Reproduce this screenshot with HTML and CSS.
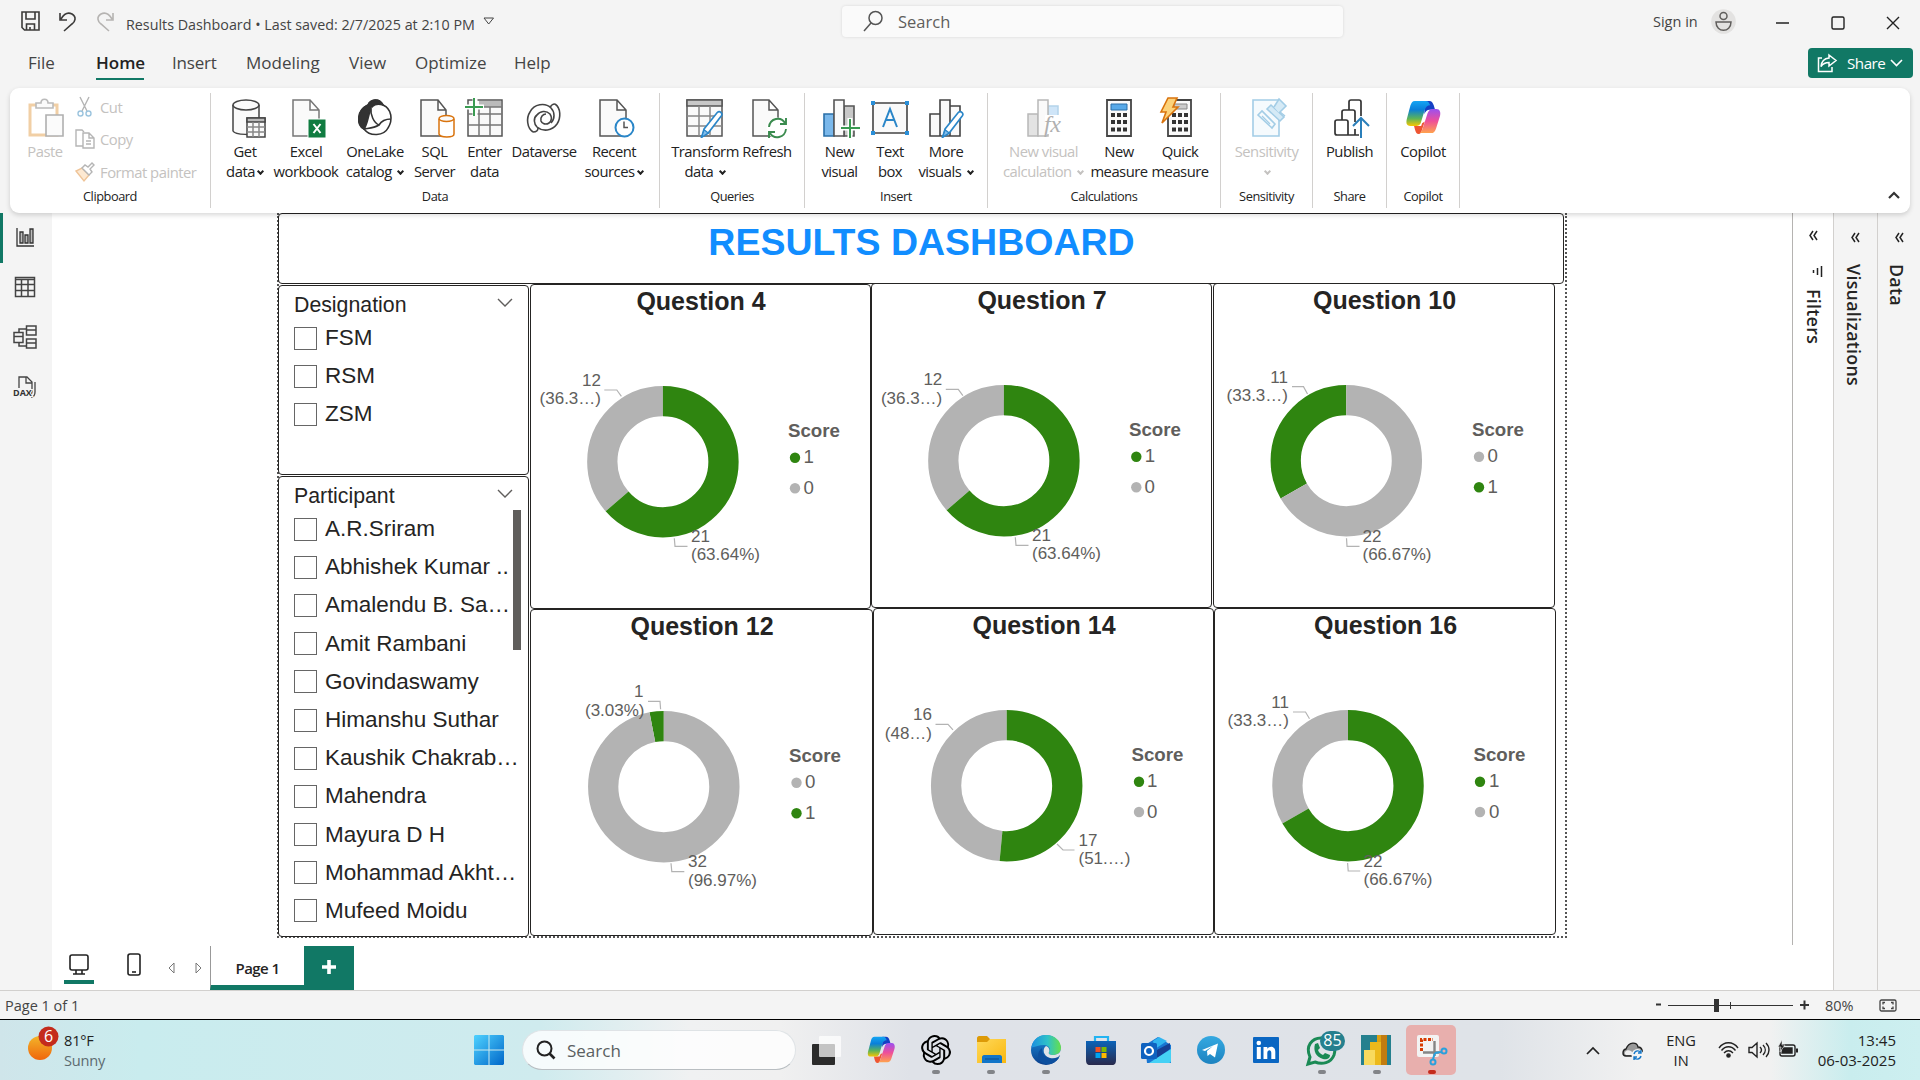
FILE: index.html
```html
<!DOCTYPE html>
<html lang="en">
<head>
<meta charset="utf-8">
<title>Results Dashboard</title>
<link rel="stylesheet" href="styles.css">
</head>
<body>
<svg class="defs" width="0" height="0">
  <defs>
    <linearGradient id="cpA" x1="0" y1="0" x2="0" y2="1"><stop offset="0" stop-color="#14a5f4"/><stop offset=".35" stop-color="#0a7fd9"/><stop offset=".7" stop-color="#5bb35a"/><stop offset="1" stop-color="#f7c600"/></linearGradient>
    <linearGradient id="cpB" x1="0" y1="0" x2="0" y2="1"><stop offset="0" stop-color="#9b50f0"/><stop offset=".5" stop-color="#ee4f9a"/><stop offset="1" stop-color="#ffa34d"/></linearGradient>
    <linearGradient id="win" x1="0" y1="0" x2="1" y2="1"><stop offset="0" stop-color="#4fd2ff"/><stop offset="1" stop-color="#0067c9"/></linearGradient>
    <linearGradient id="sun" x1="0" y1="0" x2="0" y2="1"><stop offset="0" stop-color="#f2b52a"/><stop offset="1" stop-color="#f0660c"/></linearGradient>
    <linearGradient id="fold" x1="0" y1="0" x2="1" y2="1"><stop offset="0" stop-color="#ffd95a"/><stop offset="1" stop-color="#f9b70f"/></linearGradient>
    <linearGradient id="edgeA" x1="0" y1="0" x2="1" y2="0"><stop offset="0" stop-color="#1c8fe0"/><stop offset=".55" stop-color="#2fc2c8"/><stop offset="1" stop-color="#66e04a"/></linearGradient>
    <linearGradient id="edgeB" x1="0" y1="0" x2="0" y2="1"><stop offset="0" stop-color="#1b8ddb"/><stop offset="1" stop-color="#0b3f8c"/></linearGradient>
    <linearGradient id="store" x1="0" y1="0" x2="0" y2="1"><stop offset="0" stop-color="#0b63b8"/><stop offset="1" stop-color="#2a2a4c"/></linearGradient>
    <linearGradient id="tg" x1="0" y1="0" x2="0" y2="1"><stop offset="0" stop-color="#35a9e1"/><stop offset="1" stop-color="#1d83c0"/></linearGradient>
    <symbol id="copilot" viewBox="0 0 38 38">
      <path d="M21 1h5c3 0 4 2 5 5l1.500 5h-6c-3 0-5 2-6 5z" fill="#1440c4"/>
      <path d="M9 29h8l1-3 3-2-3 9c-.7 3-1.500 5-4 5-2 0-3-1.500-4-5z" fill="#ee5532"/>
      <path d="M10 1h12c3 0 4 2 5 5-3 0-5 2-6 5l-4 13c-1 4-3 5-6 5H5c-5 0-5-4-4-8L5 6c1-3 2-5 5-5z" fill="url(#cpA)"/>
      <path d="M28 37H14c2.500 0 3.500-2 4.500-5l5.500-17c1-3 3-5 6-5h4c4 0 5 4 4 8l-4.500 14c-1 3-2.500 5-5.500 5z" fill="url(#cpB)"/>
    </symbol>
    <symbol id="pencil" viewBox="0 0 26 34">
      <path d="M1 33l3-10L20 3c3-3 7 1 5 4L9 28z" fill="#fff" stroke="#2a86c8" stroke-width="2"/>
      <path d="M1 33l3-9 5 4z" fill="#83beec" stroke="#2a86c8"/>
    </symbol>
  </defs>
</svg>

<header class="titlebar">
  <svg class="quick" width="100" height="24" viewBox="0 0 100 24" fill="none" stroke="#3b3a39" stroke-width="1.600">
    <path d="M2 3h17v18H4.500L2 18.500zM6 3v7h9V3M6.500 21v-6h8v6M10 21v-3"/>
    <path d="M40 4v7h7M41 10c3-5 7-7 11-5 5 3 3 8 0 10l-8 7"/>
    <path d="M93 4v7h-7M92 10c-3-5-7-7-11-5-5 3-3 8 0 10l8 7" stroke="#b5b3b1"/>
  </svg>
  <span class="doc">Results Dashboard • Last saved: 2/7/2025 at 2:10 PM</span>
  <svg class="doc-arrow" width="12" height="9" viewBox="0 0 12 9" fill="none" stroke="#444"><path d="M1 1h9.500L5.700 7z"/></svg>
  <div class="search">
    <svg width="20" height="22" viewBox="0 0 20 22" fill="none" stroke="#555" stroke-width="1.500"><circle cx="12.500" cy="8" r="6.500"/><path d="M8 13L1 21"/></svg>
    <span>Search</span>
  </div>
  <span class="signin">Sign in</span>
  <svg class="avatar" width="25" height="25" viewBox="0 0 25 25"><circle cx="12.500" cy="12.500" r="12.300" fill="#e3e2e1"/><g fill="none" stroke="#605e5c" stroke-width="1.500"><circle cx="12.500" cy="7" r="3.500"/><path d="M5 13h15c0 11-15 11-15 0z"/></g></svg>
  <svg class="winctl" width="124" height="16" viewBox="0 0 124 16" fill="none" stroke="#222" stroke-width="1.400"><path d="M0 8h13M111 2l12 12M123 2l-12 12"/><rect x="56" y="2" width="12" height="12" rx="1.500"/></svg>
</header>

<nav class="tabs">
  <a class="t-file">File</a><a class="t-home">Home</a><a class="t-insert">Insert</a><a class="t-model">Modeling</a><a class="t-view">View</a><a class="t-opt">Optimize</a><a class="t-help">Help</a>
  <button class="share"><svg width="20" height="20" viewBox="0 0 20 20" fill="none" stroke="#fff" stroke-width="1.500"><path d="M5 5H1.500v13.500H15V14M12 2l7 5.500-7 5.500v-3.500c-4 0-6 1-8 4 .5-5 3-8 8-8.500z"/></svg><span>Share</span><svg width="13" height="8" viewBox="0 0 13 8" fill="none" stroke="#fff" stroke-width="1.600"><path d="M1 1l5.500 5.500L12 1"/></svg></button>
</nav>

<section class="ribbon">
  <div class="group g-clip">
    <div class="btns">
      <div class="rb w-paste off"><svg width="38" height="40" viewBox="0 0 38 40" fill="#fbfbfb" stroke-width="1.600"><path d="M4 7h27v30H4z" stroke="#f1cfa5" fill="#fff" stroke-width="3"/><path d="M10 10V5h5c0-5 7-5 7 0h5v5z" stroke="#bbb"/><path d="M20 17h17v21H20z" stroke="#b0b0b0"/></svg><span>Paste</span></div>
      <div class="clip-list">
        <div class="ci"><svg width="20" height="20" viewBox="0 0 20 20" fill="none" stroke="#b5b5b5" stroke-width="1.400"><path d="M5 0l7 14M14 0L7 14"/><circle cx="5.500" cy="16.500" r="2.500" stroke="#9cc4de"/><circle cx="13.500" cy="16.500" r="2.500" stroke="#9cc4de"/></svg><span>Cut</span></div>
        <div class="ci"><svg width="20" height="20" viewBox="0 0 20 20" fill="#fff" stroke="#b5b5b5" stroke-width="1.400"><path d="M8 17H1V1h6l2 2"/><path d="M8 4h6l5 5v10H8zM14 4v5h5M11 12h5M11 15h5"/></svg><span>Copy</span></div>
        <div class="ci"><svg width="20" height="20" viewBox="0 0 20 20" fill="#fff" stroke-width="1.400"><path d="M1 9l8 10 5-6-7-7z" stroke="#efc498" fill="#fde9d2"/><path d="M7 6l7 7 3-3-2-3 4-4-2-2-4 4-3-2z" stroke="#b5b5b5"/></svg><span>Format painter</span></div>
      </div>
    </div>
    <div class="gl">Clipboard</div>
  </div>
  <div class="group g-data">
    <div class="btns">
      <div class="rb w60"><svg width="40" height="40" viewBox="0 0 40 40" fill="#fafafa" stroke="#444" stroke-width="1.500"><path d="M8 7v26c2 4 22 5 26 0V7"/><ellipse cx="21" cy="7" rx="13" ry="5"/><path d="M22 20h18v19H22z"/><path d="M22 20h18v4H22z" fill="#bbb"/><path d="M22 29h18M22 34h18M28 24v15M34 24v15" stroke="#888"/></svg><span>Get<br>data<i class="v"></i></span></div>
      <div class="rb w62"><svg width="40" height="40" viewBox="0 0 40 40" fill="#fafafa" stroke="#777" stroke-width="1.500"><path d="M7 2h17l9 10v26H7zM24 2v10h9"/><path d="M22 21h18v19H22z" fill="#107c41" stroke="#fff" stroke-width="1"/><path d="M27.500 26l7 9M34.500 26l-7 9" stroke="#fff" stroke-width="2"/></svg><span>Excel<br>workbook</span></div>
      <div class="rb w76"><svg width="40" height="40" viewBox="0 0 40 40" fill="#fff" stroke="#333" stroke-width="1.600"><path d="M13 7C16 1 24 0 28 7c9 4 10 15 5 23-4 8-18 9-24 1C1 28 2 12 13 7z"/><path d="M13 7C16 1 24 0 28 7c-6-2-11 0-12 4-3 6-3 14-7 20C1 25 2 12 13 7z" fill="#333"/><path d="M16 9c-1 8 3 16 8 18 3-5 8-6 12-6M9 31c6-1 10-1 15-4"/></svg><span>OneLake<br>catalog <i class="v"></i></span></div>
      <div class="rb w43"><svg width="40" height="40" viewBox="0 0 40 40" fill="#fafafa" stroke="#555" stroke-width="1.500"><path d="M6 2h17l8 10v26H6zM23 2v10h8"/><path d="M24 21v15c1 4 15 4 15 0V21" stroke="#d9730d" fill="#fff"/><ellipse cx="31.500" cy="20.500" rx="7.500" ry="3" stroke="#d9730d"/></svg><span>SQL<br>Server</span></div>
      <div class="rb w57"><svg width="40" height="40" viewBox="0 0 40 40" fill="none" stroke="#555" stroke-width="1.500"><path d="M3 2h34v36H3z" fill="#fafafa"/><path d="M14 3h22v6H14z" fill="#bbb" stroke="none"/><path d="M3 16h34M3 27h34M14 9v29M25 9v29M3 9h34" stroke="#777"/><path d="M10 0v18M0 9h19" stroke="#fff" stroke-width="5"/><path d="M9 0v18M0 9h18" stroke="#3a9b52" stroke-width="2"/></svg><span>Enter<br>data</span></div>
      <div class="rb w62"><svg width="40" height="40" viewBox="0 0 40 40" fill="none" stroke="#444" stroke-width="1.600"><path d="M31 6c6 4 6 14 2 20-5 7-14 8-20 3-3-3-4-9 0-12 3-4 9-5 13-1 2 3 2 7-1 9-3 2-7 1-8-2-1-4 2-7 5-7"/><path d="M9 34c-6-4-7-14-3-20 4-8 15-10 21-4 4 4 4 11 0 15M9 34c4 0 5-2 5-4M31 6c-3 0-4 1-5 4"/></svg><span>Dataverse</span></div>
      <div class="rb w78"><svg width="40" height="40" viewBox="0 0 40 40" fill="#fafafa" stroke="#555" stroke-width="1.500"><path d="M6 2h17l9 10v26H6zM23 2v10h9"/><circle cx="30.500" cy="29.500" r="9" fill="#fff" stroke="#2a86c8" stroke-width="2"/><path d="M30 23.500v6h4" fill="none"/></svg><span>Recent<br>sources<i class="v"></i></span></div>
    </div>
    <div class="gl">Data</div>
  </div>
  <div class="group g-query">
    <div class="btns">
      <div class="rb w68"><svg width="40" height="40" viewBox="0 0 40 40" fill="none" stroke="#555" stroke-width="1.500"><path d="M2 2h35v36H2z" fill="#fafafa"/><path d="M2 2h35v6H2z" fill="#c8c8c8"/><path d="M2 18h35M2 28h35M14 8v30M25 8v30" stroke="#888"/><use href="#pencil" x="14" y="12" width="25" height="28"/></svg><span>Transform<br>data <i class="v"></i></span></div>
      <div class="rb w56"><svg width="40" height="40" viewBox="0 0 40 40" fill="#fafafa" stroke="#555" stroke-width="1.500"><path d="M6 2h16l9 10v26H6zM22 2v10h9"/><circle cx="30" cy="30" r="10.500" fill="#fff" stroke="none"/><path d="M22 29c1-9 12-11 16-4M39 20v6h-6M39 31c-1 9-12 11-16 4M22 40v-6h6" fill="none" stroke="#3a8b4e" stroke-width="1.900"/></svg><span>Refresh</span></div>
    </div>
    <div class="gl">Queries</div>
  </div>
  <div class="group g-ins">
    <div class="btns">
      <div class="rb w51"><svg width="40" height="40" viewBox="0 0 40 40" stroke="#555" stroke-width="1.600"><path d="M24 8h10v30H24z" fill="#c8c8c8"/><path d="M4 16h10v22H4z" fill="#7ab8eb" stroke="#2a6fa8"/><path d="M14 2h10v36H14z" fill="#fafafa"/><path d="M30 20v20M20 30h20" stroke="#fff" stroke-width="5"/><path d="M30 21v19M21 30h19" stroke="#3a9b52" stroke-width="2"/></svg><span>New<br>visual</span></div>
      <div class="rb w50"><svg width="40" height="40" viewBox="0 0 40 40" fill="none" stroke="#444" stroke-width="1.600"><path d="M3 5h34v30H3z" fill="#fafafa"/><path d="M13 29l7-18 7 18M15.500 22h9" stroke="#2a86c8" stroke-width="2"/><path d="M1 3h4v4H1zM35 3h4v4h-4zM1 33h4v4H1zM35 33h4v4h-4z" fill="#2a8fd8" stroke="none"/></svg><span>Text<br>box</span></div>
      <div class="rb w62"><svg width="40" height="40" viewBox="0 0 40 40" stroke="#444" stroke-width="1.600"><path d="M4 16h10v22H4zM24 8h10v30H24zM14 2h10v36H14z" fill="#fafafa"/><use href="#pencil" x="14" y="12" width="25" height="28"/></svg><span>More<br>visuals <i class="v"></i></span></div>
    </div>
    <div class="gl">Insert</div>
  </div>
  <div class="group g-calc">
    <div class="btns">
      <div class="rb w89 off"><svg width="40" height="40" viewBox="0 0 40 40" stroke="#b8b8b8" stroke-width="1.500"><path d="M24 8h10v16H24z" fill="#cfe5f8" stroke="#b4d3ea"/><path d="M4 16h10v22H4z" fill="#e3e3e3"/><path d="M14 2h10v36H14z" fill="#fafafa"/><path d="M21 17h18v19H21z" fill="#fff" stroke="none"/><text x="20" y="34" class="fx">fx</text></svg><span>New visual<br>calculation <i class="v"></i></span></div>
      <div class="rb w62"><svg width="40" height="40" viewBox="0 0 40 40" fill="#fafafa" stroke="#444" stroke-width="1.800"><path d="M8 2h24v36H8z"/><path d="M12 6h16v6H12z" fill="#58a9e8" stroke="#2a6fa8" stroke-width="1"/><path d="M12 17h16M12 24h16M12 31.500h16" stroke="#333" stroke-width="4" stroke-dasharray="4 2"/></svg><span>New<br>measure</span></div>
      <div class="rb w60"><svg width="40" height="40" viewBox="0 0 40 40" fill="#fafafa" stroke="#444" stroke-width="1.800"><path d="M8 2h23v36H8z"/><path d="M14 6h13v5H14z" fill="#ccc" stroke="#888" stroke-width="1"/><path d="M12 17h16M12 24h16M12 31.500h16" stroke="#333" stroke-width="4" stroke-dasharray="4 2"/><path d="M8 0h9l-4 9h5L2 25l4-11H1z" fill="#fcd27a" stroke="#d9730d" stroke-width="1.600"/></svg><span>Quick<br>measure</span></div>
    </div>
    <div class="gl">Calculations</div>
  </div>
  <div class="group g-sens">
    <div class="btns"><div class="rb off"><svg width="40" height="40" viewBox="0 0 40 40" fill="#f5fafd" stroke="#a3cde6" stroke-width="1.600"><path d="M6 2h26v36H6z"/><path d="M11 17l4-4 13 13-3 4z"/><path d="M15 18l8 8" stroke-width="1.200"/><path d="M20 11l4-4 13 12-4 4z" fill="#d5eaf6"/><path d="M27 9l5-8 7 7-7 7M33 14l5 4" fill="#d5eaf6"/></svg><span>Sensitivity<br><i class="v"></i></span></div></div>
    <div class="gl">Sensitivity</div>
  </div>
  <div class="group g-share">
    <div class="btns"><div class="rb"><svg width="40" height="40" viewBox="0 0 40 40" fill="none" stroke="#333" stroke-width="1.700"><path d="M31 18V4c0-1-1-2-2-2H21c-1 0-2 1-2 2v8"/><path d="M12 22v-8c0-1 1-2 2-2h9c1 0 2 1 2 2v10M29 37H7c-1 0-2-1-2-2V24c0-1 1-2 2-2h9c1 0 2 1 2 2v13M25 31v6"/><path d="M31 40V20M23 28l8-8 8 8" stroke="#2a7fba" stroke-width="2"/></svg><span>Publish</span></div></div>
    <div class="gl">Share</div>
  </div>
  <div class="group g-cop">
    <div class="btns"><div class="rb"><svg width="38" height="40"><use href="#copilot" x="0" y="2" width="38" height="34"/></svg><span>Copilot</span></div></div>
    <div class="gl">Copilot</div>
  </div>
  <svg class="collapse" width="12" height="8" viewBox="0 0 12 8" fill="none" stroke="#333" stroke-width="2.200"><path d="M1 7l5-5 5 5"/></svg>
</section>

<main class="work">
  <aside class="rail">
    <svg width="24" height="24" viewBox="0 0 24 24" fill="#bbb" stroke="#333" stroke-width="1.300"><path d="M4 3v18h17" fill="none"/><path d="M7 7h3v11H7zM12 10h3v8h-3zM17 4h3v14h-3z"/></svg>
    <svg width="24" height="24" viewBox="0 0 24 24" fill="none" stroke="#444" stroke-width="1.500"><path d="M2.500 2.500h19v19h-19zM2.500 4.500h19M2.500 9.500h19M2.500 15.500h19M8.500 5v16M15 5v16"/></svg>
    <svg width="24" height="24" viewBox="0 0 24 24" fill="none" stroke="#444" stroke-width="1.500"><path d="M1 7.500h9v10H1zM1 11.500h9M13.500 1H23v9h-9.500zM13.500 5H23M13.500 14H23v9h-9.500zM13.500 18H23M6 7V4h7.500M6 18v3h7.500"/></svg>
    <svg width="24" height="24" viewBox="0 0 24 24" fill="none" stroke="#444" stroke-width="1.300"><path d="M6 13V2h8l5 5v9c0 3-1 4-3 4M13 2v6h6M22 7v10c0 3-1 5-4 5"/><text x="0" y="21" class="dax">DAX</text></svg>
  </aside>
  <div class="center">
    <div class="report">
      <h1 class="banner">RESULTS DASHBOARD</h1>
      <div class="grid">
        <div class="slicers">
          <div class="slicer s1">
            <div class="sh">Designation<svg width="16" height="10" viewBox="0 0 16 10" fill="none" stroke="#605e5c" stroke-width="1.400"><path d="M1 1l7 7 7-7"/></svg></div>
            <label class="it"><b></b>FSM</label><label class="it"><b></b>RSM</label><label class="it"><b></b>ZSM</label>
          </div>
          <div class="slicer s2">
            <div class="sh">Participant<svg width="16" height="10" viewBox="0 0 16 10" fill="none" stroke="#605e5c" stroke-width="1.400"><path d="M1 1l7 7 7-7"/></svg></div>
            <label class="it"><b></b>A.R.Sriram</label><label class="it"><b></b>Abhishek Kumar ..</label><label class="it"><b></b>Amalendu B. Sa…</label><label class="it"><b></b>Amit Rambani</label><label class="it"><b></b>Govindaswamy</label><label class="it"><b></b>Himanshu Suthar</label><label class="it"><b></b>Kaushik Chakrab…</label><label class="it"><b></b>Mahendra</label><label class="it"><b></b>Mayura D H</label><label class="it"><b></b>Mohammad Akht…</label><label class="it"><b></b>Mufeed Moidu</label>
            <div class="thumb"></div>
          </div>
        </div>
        <div class="charts">
          <div class="row">
            <div class="tile q4"><h2>Question 4</h2>
              <svg viewBox="531 325 339 280" width="339" height="280">
                <circle class="ring gy" cx="662.900" cy="461.700" r="60.600" pathLength="100" stroke-dasharray="36.360 63.640" stroke-dashoffset="-63.640" transform="rotate(-90 662.900 461.700)"/><circle class="ring gn" cx="662.900" cy="461.700" r="60.600" pathLength="100" stroke-dasharray="63.640 100" transform="rotate(-90 662.900 461.700)"/>
                <path class="lead" d="M604.300 390h12.500l4.600 6.300M674.300 538.300l.7 8h12.500"/>
                <g class="lab"><text class="e" x="601" y="386">12</text><text class="e" x="601" y="404">(36.3…)</text><text x="691" y="542">21</text><text x="691" y="560">(63.64%)</text></g>
                <g class="leg"><text class="sc" x="788" y="436.700">Score</text><circle class="fn" cx="795" cy="457.700" r="5.200"/><text x="803.500" y="463">1</text><circle class="fy" cx="795" cy="488.300" r="5.200"/><text x="803.500" y="494">0</text></g>
              </svg></div>
            <div class="tile q7"><h2>Question 7</h2>
              <svg viewBox="872 324 339 280" width="339" height="280">
                <circle class="ring gy" cx="1003.900" cy="460.700" r="60.600" pathLength="100" stroke-dasharray="36.360 63.640" stroke-dashoffset="-63.640" transform="rotate(-90 1003.900 460.700)"/><circle class="ring gn" cx="1003.900" cy="460.700" r="60.600" pathLength="100" stroke-dasharray="63.640 100" transform="rotate(-90 1003.900 460.700)"/>
                <path class="lead" d="M945.800 389.300h12.500l4.600 6.300M1015.300 537.300l.7 8h12.500"/>
                <g class="lab"><text class="e" x="942.300" y="385">12</text><text class="e" x="942.300" y="404">(36.3…)</text><text x="1032" y="541">21</text><text x="1032" y="559">(63.64%)</text></g>
                <g class="leg"><text class="sc" x="1129" y="435.700">Score</text><circle class="fn" cx="1136.300" cy="456.700" r="5.200"/><text x="1144.800" y="462">1</text><circle class="fy" cx="1136.300" cy="487.300" r="5.200"/><text x="1144.500" y="493">0</text></g>
              </svg></div>
            <div class="tile q10"><h2>Question 10</h2>
              <svg viewBox="1214 324 340 280" width="340" height="280">
                <circle class="ring gn" cx="1346.300" cy="460.700" r="60.600" pathLength="100" stroke-dasharray="33.330 66.670" stroke-dashoffset="-66.670" transform="rotate(-90 1346.300 460.700)"/><circle class="ring gy" cx="1346.300" cy="460.700" r="60.600" pathLength="100" stroke-dasharray="66.670 100" transform="rotate(-90 1346.300 460.700)"/>
                <path class="lead" d="M1292 386.700h11.500l4 7.300M1346.500 538.300l.5 8h12.500"/>
                <g class="lab"><text class="e" x="1288" y="383">11</text><text class="e" x="1288" y="401.300">(33.3…)</text><text x="1362.500" y="542">22</text><text x="1362.500" y="560">(66.67%)</text></g>
                <g class="leg"><text class="sc" x="1472" y="435.700">Score</text><circle class="fy" cx="1479" cy="456.700" r="5.200"/><text x="1487.500" y="462">0</text><circle class="fn" cx="1479" cy="487.300" r="5.200"/><text x="1487.500" y="493">1</text></g>
              </svg></div>
          </div>
          <div class="row">
            <div class="tile q12"><h2>Question 12</h2>
              <svg viewBox="531 650 340 280" width="340" height="280">
                <circle class="ring gn" cx="663.800" cy="786.700" r="60.600" pathLength="100" stroke-dasharray="3.030 96.970" stroke-dashoffset="-96.970" transform="rotate(-90 663.800 786.700)"/><circle class="ring gy" cx="663.800" cy="786.700" r="60.600" pathLength="100" stroke-dasharray="96.970 100" transform="rotate(-90 663.800 786.700)"/>
                <path class="lead" d="M648 701.300h12l.6 8M671 863.300l.8 8.300h12.500"/>
                <g class="lab"><text class="e" x="643.500" y="697">1</text><text class="e" x="644.500" y="715.700">(3.03%)</text><text x="688" y="867">32</text><text x="688" y="886">(96.97%)</text></g>
                <g class="leg"><text class="sc" x="789" y="761.700">Score</text><circle class="fy" cx="796.500" cy="782.700" r="5.200"/><text x="805" y="788">0</text><circle class="fn" cx="796.500" cy="813.300" r="5.200"/><text x="805" y="819">1</text></g>
              </svg></div>
            <div class="tile q14"><h2>Question 14</h2>
              <svg viewBox="874 649 339 280" width="339" height="280">
                <circle class="ring gy" cx="1006.700" cy="785.700" r="60.600" pathLength="100" stroke-dasharray="48.480 51.520" stroke-dashoffset="-51.520" transform="rotate(-90 1006.700 785.700)"/><circle class="ring gn" cx="1006.700" cy="785.700" r="60.600" pathLength="100" stroke-dasharray="51.520 100" transform="rotate(-90 1006.700 785.700)"/>
                <path class="lead" d="M935.500 724.300h12.500l5 5.500M1057 844l6 6h11.500"/>
                <g class="lab"><text class="e" x="932" y="720">16</text><text class="e" x="932" y="739">(48…)</text><text x="1078.500" y="846">17</text><text x="1078.500" y="864.300">(51.…)</text></g>
                <g class="leg"><text class="sc" x="1131.500" y="760.700">Score</text><circle class="fn" cx="1139" cy="781.700" r="5.200"/><text x="1147" y="787">1</text><circle class="fy" cx="1139" cy="812" r="5.200"/><text x="1147" y="818">0</text></g>
              </svg></div>
            <div class="tile q16"><h2>Question 16</h2>
              <svg viewBox="1215 649 340 280" width="340" height="280">
                <circle class="ring gy" cx="1348" cy="785.700" r="60.600" pathLength="100" stroke-dasharray="33.330 66.670" stroke-dashoffset="-66.670" transform="rotate(-90 1348 785.700)"/><circle class="ring gn" cx="1348" cy="785.700" r="60.600" pathLength="100" stroke-dasharray="66.670 100" transform="rotate(-90 1348 785.700)"/>
                <path class="lead" d="M1293 712h12.500l4 6.700M1347.600 863l.6 8h12"/>
                <g class="lab"><text class="e" x="1289" y="708">11</text><text class="e" x="1289" y="726.300">(33.3…)</text><text x="1363.500" y="867">22</text><text x="1363.500" y="885">(66.67%)</text></g>
                <g class="leg"><text class="sc" x="1473.500" y="760.700">Score</text><circle class="fn" cx="1480" cy="781.700" r="5.200"/><text x="1489" y="787">1</text><circle class="fy" cx="1480" cy="812" r="5.200"/><text x="1489" y="818">0</text></g>
              </svg></div>
          </div>
        </div>
      </div>
    </div>
    <div class="pages">
      <div class="dev on"><svg width="20" height="22" viewBox="0 0 20 22" fill="none" stroke="#222" stroke-width="1.600"><rect x="1" y="1" width="18" height="15" rx="2"/><path d="M7 16v4M13 16v4M4 20h12"/></svg></div>
      <div class="dev ph"><svg width="14" height="24" viewBox="0 0 14 24" fill="none" stroke="#222" stroke-width="1.600"><rect x="1" y="0" width="12" height="21" rx="2"/><path d="M5 18h4"/></svg></div>
      <svg class="arr" width="34" height="12" viewBox="0 0 34 12" fill="none" stroke="#777"><path d="M6 1L1 6l5 5zM28 1l5 5-5 5z"/></svg>
      <div class="ptab">Page 1</div>
      <div class="plus"><svg width="14" height="14" viewBox="0 0 14 14"><path d="M5.200 0h3.600v5.200H14v3.600H8.800V14H5.200V8.800H0V5.200h5.200z" fill="#fff"/></svg></div>
    </div>
  </div>
  <aside class="filters"><svg class="dbl" width="9" height="11" viewBox="0 0 9 11" fill="none" stroke="#222" stroke-width="1.500"><path d="M4 1L1 5.500 4 10M8 1L5 5.500 8 10"/></svg><svg class="fi" width="12" height="12" viewBox="0 0 12 12" fill="none" stroke="#222" stroke-width="1.500"><path d="M10.500 0v11M6.500 2v7M2.500 4v3"/></svg><span>Filters</span></aside>
  <aside class="pane vis"><svg class="dbl" width="9" height="11" viewBox="0 0 9 11" fill="none" stroke="#222" stroke-width="1.500"><path d="M4 1L1 5.500 4 10M8 1L5 5.500 8 10"/></svg><span>Visualizations</span></aside>
  <aside class="pane dat"><svg class="dbl" width="9" height="11" viewBox="0 0 9 11" fill="none" stroke="#222" stroke-width="1.500"><path d="M4 1L1 5.500 4 10M8 1L5 5.500 8 10"/></svg><span>Data</span></aside>
</main>

<footer class="status">
  <span>Page 1 of 1</span>
  <svg class="zoom" width="154" height="16" viewBox="0 0 154 16" stroke="#333" fill="none"><path d="M1 7.500h5M145 8h9M149.500 3.500v9" stroke-width="2"/><path d="M13 8.500h125M75.500 5v7"/><path d="M61.500 2v13" stroke-width="5"/></svg>
  <span class="pct">80%</span>
  <svg width="18" height="13" viewBox="0 0 18 13" fill="none" stroke="#444" stroke-width="1.300"><rect x="1" y="1" width="16" height="11" rx="1.500"/><path d="M6 3.500H4v2M12 3.500h2v2M6 9.500H4v-2M12 9.500h2v-2"/></svg>
</footer>

<footer class="taskbar">
  <div class="weather">
    <svg width="32" height="36" viewBox="0 0 32 36"><circle cx="12" cy="22" r="12" fill="url(#sun)"/><circle cx="20.500" cy="10.500" r="10" fill="#c42b1c"/><text x="20.500" y="16" class="badge">6</text></svg>
    <div class="wt"><span>81°F</span><span class="dim">Sunny</span></div>
  </div>
  <svg class="start" width="30" height="30" viewBox="0 0 30 30"><path d="M1 0h13.500v14.500H0V1zM15.500 0H29l1 1v13.500H15.500zM0 15.500h14.500V30H1l-1-1zM15.500 15.500H30V29l-1 1H15.500z" fill="url(#win)"/></svg>
  <div class="tsearch"><svg width="20" height="20" viewBox="0 0 20 20" fill="none" stroke="#222" stroke-width="2"><circle cx="8.500" cy="8.500" r="7"/><path d="M13.500 13.500l5 5" stroke-width="2.600"/></svg><span>Search</span></div>
  <div class="apps">
    <div class="app"><svg width="30" height="30" viewBox="0 0 30 30"><rect x="1" y="9" width="23" height="21" rx="1" fill="#2b2b2b"/><rect x="8" y="1" width="22" height="21" rx="1" fill="#fff" opacity=".72"/></svg></div>
    <div class="app"><svg width="30" height="30"><use href="#copilot" x="1" y="1" width="28" height="27"/></svg></div>
    <div class="app run"><svg width="30" height="30" viewBox="0 0 24 24"><path d="M22.2819 9.8211a5.9847 5.9847 0 0 0-.5157-4.9108 6.0462 6.0462 0 0 0-6.5098-2.9A6.0651 6.0651 0 0 0 4.9807 4.1818a5.9847 5.9847 0 0 0-3.9977 2.9 6.0462 6.0462 0 0 0 .7427 7.0966 5.98 5.98 0 0 0 .511 4.9107 6.051 6.051 0 0 0 6.5146 2.9001A5.9847 5.9847 0 0 0 13.2599 24a6.0557 6.0557 0 0 0 5.7718-4.2058 5.9894 5.9894 0 0 0 3.9977-2.9001 6.0557 6.0557 0 0 0-.7475-7.0729zm-9.022 12.6081a4.4755 4.4755 0 0 1-2.8764-1.0408l.1419-.0804 4.7783-2.7582a.7948.7948 0 0 0 .3927-.6813v-6.7369l2.02 1.1686a.071.071 0 0 1 .038.052v5.5826a4.504 4.504 0 0 1-4.4945 4.4944zm-9.6607-4.1254a4.4708 4.4708 0 0 1-.5346-3.0137l.142.0852 4.783 2.7582a.7712.7712 0 0 0 .7806 0l5.8428-3.3685v2.3324a.0804.0804 0 0 1-.0332.0615L9.74 19.9502a4.4992 4.4992 0 0 1-6.1408-1.6464zM2.3408 7.8956a4.485 4.485 0 0 1 2.3655-1.9728V11.6a.7664.7664 0 0 0 .3879.6765l5.8144 3.3543-2.0201 1.1685a.0757.0757 0 0 1-.071 0l-4.8303-2.7865A4.504 4.504 0 0 1 2.3408 7.872zm16.5963 3.8558L13.1038 8.364 15.1192 7.2a.0757.0757 0 0 1 .071 0l4.8303 2.7913a4.4944 4.4944 0 0 1-.6765 8.1042v-5.6772a.79.79 0 0 0-.407-.667zm2.0107-3.0231l-.142-.0852-4.7735-2.7818a.7759.7759 0 0 0-.7854 0L9.409 9.2297V6.8974a.0662.0662 0 0 1 .0284-.0615l4.8303-2.7866a4.4992 4.4992 0 0 1 6.6802 4.66zM8.3065 12.863l-2.02-1.1638a.0804.0804 0 0 1-.038-.0567V6.0742a4.4992 4.4992 0 0 1 7.3757-3.4537l-.142.0805L8.704 5.459a.7948.7948 0 0 0-.3927.6813zm1.0976-2.3654l2.602-1.4998 2.6069 1.4998v2.9994l-2.5974 1.4997-2.6067-1.4997Z" fill="#000"/></svg></div>
    <div class="app run"><svg width="30" height="30" viewBox="0 0 30 30"><path d="M1 3c0-1 1-2 2-2h8l3 3h15v10H1z" fill="#dd9a07"/><path d="M1 7h10l3-3h16v24H1z" fill="url(#fold)"/><path d="M6 28v-6c0-1 1-2 2-2h16c1 0 2 1 2 2v6z" fill="#1275c8"/><path d="M9 24h14" stroke="#0a4c8c"/></svg></div>
    <div class="app run"><svg width="32" height="32" viewBox="0 0 32 32"><circle cx="16" cy="16" r="15" fill="url(#edgeB)"/><path d="M1.500 13C3 5 9 1 16 1c9 0 15 6 15 13 0 5-4 7-8 7-3 0-5-1-4-3 2-3 0-7-5-7-6 0-10 3-12.500 2z" fill="url(#edgeA)"/><path d="M12 14c-1 9 7 13 17 10-5 7-13 8-18 4-4-4-4-10 1-14z" fill="#0d4f9e"/><path d="M16 12c-4 3-3 10 4 12 5 1 9-1 10-3l1 1 1-8h-1c0 5-4 7-8 7-3 0-5-1-4-3 1-2 0-5-3-6z" fill="#e0e3e8"/></svg></div>
    <div class="app"><svg width="30" height="30" viewBox="0 0 30 30"><path d="M9 6V2h13v4" fill="none" stroke="#23b4f2" stroke-width="2.200"/><path d="M0 6h30v19c0 3-1 5-4 5H4c-3 0-4-2-4-5z" fill="url(#store)"/><path d="M9.500 12h5v5h-5z" fill="#f25022"/><path d="M15.500 12h5v5h-5z" fill="#7fba00"/><path d="M9.500 18h5v5h-5z" fill="#00a4ef"/><path d="M15.500 18h5v5h-5z" fill="#ffb900"/></svg></div>
    <div class="app"><svg width="30" height="30" viewBox="0 0 30 30"><path d="M4 10L17 2l13 8v18H6z" fill="#1976d2"/><path d="M12 6l6-4 8 4-12 8z" fill="#31b5f0"/><path d="M14 16l15-8v6L15 24z" fill="#173f93"/><path d="M8 28l22-14v12c0 1-1 2-2 2z" fill="#45d1f5"/><rect x="0" y="8" width="16" height="16" rx="1.500" fill="#0f62c0"/><circle cx="8" cy="16" r="4" fill="none" stroke="#fff" stroke-width="2.200"/></svg></div>
    <div class="app"><svg width="30" height="30" viewBox="0 0 30 30"><circle cx="15" cy="15" r="14" fill="url(#tg)"/><path d="M6 15l16-6.500-3 14-5-3.500-2.500 2-.5-5 6-5-8 5z" fill="#fff"/></svg></div>
    <div class="app"><svg width="28" height="28" viewBox="0 0 28 28"><rect x="1" y="1" width="26" height="26" rx="1" fill="#0a66c2"/><circle cx="6.800" cy="7" r="2.300" fill="#fff"/><path d="M4.800 11h4v12h-4zM11.500 11h3.800v1.800c2-3 8-3 8 3V23h-4v-6c0-4-4-3.500-4 0v6h-3.800z" fill="#fff"/></svg></div>
    <div class="app run"><svg width="40" height="36" viewBox="0 0 40 36"><path d="M7 32l2-7C4 14 11 6 20 6s16 8 13 17c-3 8-12 10-19 7z" fill="none" stroke="#1a8a55" stroke-width="3"/><path d="M14 12l3-1 2 5-2 2c1 3 3 4 5 5l2-2 5 2c0 4-4 5-7 4-7-2-10-8-8-15z" fill="#1a8a55"/><rect x="19" y="-1" width="25" height="20" rx="10" fill="#25808e"/><text x="31.500" y="14" class="badge">85</text></svg></div>
    <div class="app run"><svg width="30" height="30" viewBox="0 0 30 30"><path d="M0 0h30v30H0z" fill="#25808e"/><path d="M16 0h10v30H16z" fill="#dda010"/><path d="M20 0h6v30h-6z" fill="#c27c10"/><path d="M9 7h11v23H9z" fill="#ecb91c"/><path d="M3 15h11v15H3z" fill="#f8da5e"/></svg></div>
    <div class="app run snip"><svg width="30" height="30" viewBox="0 0 30 30"><rect x="0" y="0" width="22" height="22" rx="2" fill="#f3f3f3"/><path d="M4.500 16V4.500H16" fill="none" stroke="#d83b01" stroke-width="3" stroke-dasharray="3 1.500"/><path d="M17.500 6v15M6 17.500h16" stroke="#858585" stroke-width="2.400"/><g fill="none" stroke="#2aa0dc" stroke-width="2"><path d="M18 18l-2 6M18 18l6-1"/><circle cx="16" cy="27" r="2.500"/><circle cx="27" cy="16" r="2.500"/></g></svg></div>
  </div>
  <svg class="chev" width="14" height="9" viewBox="0 0 14 9" fill="none" stroke="#222" stroke-width="1.700"><path d="M1 8l6-6 6 6"/></svg>
  <svg class="cloud" width="22" height="20" viewBox="0 0 22 20"><path d="M4 16c-4 0-4-6 0-7C7 1 15 2 16 7c5 0 6 8 1 9z" fill="#999" stroke="#222" stroke-width="1.400"/><path d="M3 14c-1-3 3-5 6-3l4 4H4z" fill="#eee"/><circle cx="15.500" cy="15" r="6" fill="#f4f4f4"/><path d="M12 14c1-4 6-4 7-1M19 10v3h-3M19 16c-1 4-6 4-7 1M12 20v-3h3" fill="none" stroke="#1979c8" stroke-width="1.400"/></svg>
  <div class="lang">ENG<br>IN</div>
  <svg class="tray" width="80" height="20" viewBox="0 0 80 20" fill="none" stroke="#222" stroke-width="1.400"><path d="M1 8c5-7 14-7 19 0M3.500 10.500c4-5 10-5 14 0M6 13c3-3 6-3 9 0"/><circle cx="10.500" cy="15.500" r="1.600" fill="#222"/><path d="M31 7.500h3l5-4.500v14l-5-4.500h-3zM42 7c2 2 2 4 0 6M45 5c3 3 3 7 0 10M48 3c4 4 4 10 0 14"/><rect x="62" y="5" width="15" height="11" rx="2"/><path d="M65 8h9v5h-10z" fill="#222"/><path d="M79 8.500v4" stroke-width="2"/><path d="M64 0l-4 7h3l-1 5 5-7h-3z" fill="#222" stroke="#eee" stroke-width=".6"/></svg>
  <div class="clock">13:45<br>06-03-2025</div>
</footer>
</body>
</html>
```
FILE: styles.css
```css
* { box-sizing: border-box; }
body { margin: 0; width: 1920px; height: 1080px; overflow: hidden; background: #f4f4f4; color: #252423; font-family: "Open Sans", "Noto Sans", sans-serif; font-size: 14px; display: flex; flex-direction: column; }
svg { display: block; flex: none; overflow: visible; }
.defs { position: absolute; }

.titlebar { height: 42px; display: flex; align-items: center; flex: none; }
.quick { margin-left: 20px; }
.doc { margin-left: 6px; margin-top: 6px; width: 350px; color: #444; font-size: 14.300px; white-space: nowrap; }
.doc-arrow { margin-left: 7px; }
.search { margin-left: 347px; width: 501px; height: 31px; background: #fafafa; border-radius: 4px; box-shadow: 0 0 3px rgba(0,0,0,.12); display: flex; align-items: center; gap: 15px; padding-left: 21px; color: #605e5c; font-size: 16.500px; }
.signin { margin-left: 310px; width: 46px; font-size: 14.500px; color: #444; white-space: nowrap; }
.avatar { margin-left: 12px; }
.winctl { margin-left: 40px; margin-top: 4px; }

.tabs { height: 46px; display: flex; align-items: center; position: relative; flex: none; font-size: 17px; color: #444; }
.tabs a { white-space: nowrap; height: 38px; line-height: 41px; margin-top: -8px; }
.t-file { margin-left: 28px; width: 68px; }
.t-home { width: 48px; margin-right: 28px; font-weight: 600; color: #222; border-bottom: 2.500px solid #117865; }
.t-insert { width: 74px; letter-spacing: -.2px; }
.t-model { width: 103px; }
.t-view { width: 66px; }
.t-opt { width: 99px; }
.share { margin: -5px 7px 0 auto; width: 105px; height: 30px; border: 0; border-radius: 4px; background: #117865; color: #fff; display: flex; align-items: center; padding: 0 10px 0 9px; font: 500 15.200px "Open Sans", sans-serif; letter-spacing: -.5px; }
.share span { margin-left: 10px; margin-right: auto; }

.ribbon { flex: none; margin: 0 10px; height: 125px; background: #fff; border-radius: 9px; box-shadow: 0 2px 5px rgba(0,0,0,.16); display: flex; padding-top: 5px; position: relative; z-index: 2; font-size: 14.800px; color: #222; letter-spacing: -.5px; }
.group { height: 115px; border-right: 1px solid #d2d0ce; display: flex; flex-direction: column; justify-content: space-between; flex: none; }
.btns { display: flex; }
.gl { text-align: center; font-size: 12.800px; line-height: 18px; padding-bottom: 3px; height: 21px; letter-spacing: -.45px; }
.g-clip { width: 201px; }
.g-data { width: 449px; padding-left: 4px; }
.g-data .gl { margin-left: -4px; }
.g-query { width: 145px; padding-left: 11px; }
.g-query .gl { margin-left: -11px; }
.g-ins { width: 183px; padding-left: 9px; }
.g-ins .gl { margin-left: -9px; }
.g-calc { width: 233px; padding-left: 11px; }
.g-calc .gl { margin-left: -11px; }
.g-sens { width: 92px; }
.g-share { width: 74px; }
.g-cop { width: 73px; }
.rb { flex: 1; display: flex; flex-direction: column; align-items: center; text-align: center; line-height: 20px; padding-top: 5px; white-space: nowrap; }
.rb span { margin: 3px -20px 0; width: calc(100% + 40px); }
.w-paste { flex: none; width: 60px; padding-left: 10px; }
.w60 { flex: none; width: 60px; }
.w62 { flex: none; width: 62px; }
.w76 { flex: none; width: 76px; }
.w43 { flex: none; width: 43px; }
.w57 { flex: none; width: 57px; }
.w78 { flex: none; width: 78px; }
.w68 { flex: none; width: 68px; }
.w56 { flex: none; width: 56px; }
.w51 { flex: none; width: 51px; }
.w50 { flex: none; width: 50px; }
.w89 { flex: none; width: 89px; }
.off { color: #c4c2c0; }
.v { display: inline-block; width: 5px; height: 5px; border: solid currentColor; border-width: 0 2px 2px 0; transform: rotate(45deg); margin: 0 1px 3px 3px; }
.fx { font: italic 24px "Liberation Serif", serif; fill: #b0b0b0; stroke: none; }
.clip-list { padding-left: 5px; color: #c4c2c0; height: 94px; margin-top: -2px; }
.ci { display: flex; align-items: center; gap: 5px; height: 32.300px; white-space: nowrap; }
.collapse { margin: 98px 10px 0 auto; }

.work { display: flex; height: 777px; flex: none; background: #fff; }
.rail { width: 52px; background: #f4f4f4; border-left: 3px solid transparent; border-image: linear-gradient(#117865 50px, transparent 50px) 0 0 0 3; display: flex; flex-direction: column; align-items: center; gap: 26px; padding: 12px 5px 0 0; }
.dax { font: 700 9px "Open Sans", sans-serif; fill: #333; stroke: #f4f4f4; stroke-width: 2px; paint-order: stroke; }
.center { width: 1740px; display: flex; flex-direction: column; }
.report { margin-left: 225px; width: 1290px; height: 725px; border: dotted #555; border-width: 0 2px 2px; }
.banner { margin: 0 0 -1px -1px; width: 1286px; height: 71px; border: 1px solid #252423; border-radius: 4px; color: #118dff; font: bold 37.500px/56px "Liberation Sans", Arial, sans-serif; text-align: center; padding-left: 1px; }
.grid { display: flex; font-family: "Liberation Sans", Arial, sans-serif; }
.slicers { width: 251px; margin: 2px 0 0 -1px; }
.slicer { border: 1px solid #252423; border-radius: 4px; padding-left: 15px; position: relative; }
.s1 { height: 190px; }
.s2 { height: 461px; margin-top: 1px; }
.sh { font-size: 21.300px; line-height: 24px; height: 33px; padding-top: 7px; display: flex; justify-content: space-between; padding-right: 15px; }
.sh svg { margin-top: 5px; }
.it { display: flex; align-items: center; gap: 8px; height: 38.200px; font-size: 22.500px; white-space: nowrap; }
.it b { width: 23px; height: 23px; border: 1px solid #666; background: #fff; flex: none; }
.thumb { position: absolute; right: 7px; top: 33px; width: 8px; height: 140px; background: #605e5c; }
.charts { margin-left: 1px; }
.row { display: flex; align-items: flex-start; }
.tile { border: 1px solid #252423; border-radius: 4px; height: 325px; overflow: hidden; }
.tile h2 { margin: 0; height: 40px; font-size: 25px; line-height: 33px; text-align: center; padding-left: 1px; }
.tile svg { overflow: hidden; }
.q4 { width: 341px; margin-top: 1px; }
.q7 { width: 341px; }
.q10 { width: 342px; margin-left: 1px; }
.q12 { width: 343px; height: 327px; }
.q14 { width: 341px; height: 327px; margin-top: -1px; }
.q16 { width: 342px; height: 327px; margin-top: -1px; }
.ring { fill: none; stroke-width: 30.300px; }
.gy { stroke: #b3b3b3; }
.gn { stroke: #2f8510; }
.fy { fill: #b3b3b3; }
.fn { fill: #2f8510; }
.lead { fill: none; stroke: #b3b3b3; stroke-width: 1.200px; }
.lab { font-size: 17px; fill: #605e5c; }
.e { text-anchor: end; }
.leg { font-size: 18.700px; fill: #605e5c; }
.sc { font-weight: bold; }

.pages { display: flex; height: 44px; margin-top: auto; }
.dev { width: 30px; margin-left: 12px; display: flex; flex-direction: column; align-items: center; padding-top: 8px; height: 38px; }
.on { border-bottom: 4px solid #117865; }
.ph { margin-left: 25px; }
.arr { margin: 16px 0 0 19px; }
.ptab { margin-left: 8px; width: 94px; border-left: 1px solid #999; border-bottom: 5px solid #117865; text-align: center; font-size: 15px; font-weight: 600; line-height: 44px; height: 44px; letter-spacing: -.6px; }
.plus { width: 50px; height: 44px; background: #117865; display: flex; align-items: center; justify-content: center; padding-bottom: 3px; }

.filters { width: 41px; height: 732px; border-left: 1px solid #b5b3b1; display: flex; flex-direction: column; align-items: center; padding-top: 17px; }
.filters .fi { margin: 25px 0 0 8px; }
.filters span, .pane span { writing-mode: vertical-rl; font-size: 17.800px; font-weight: 600; letter-spacing: .3px; line-height: 24px; white-space: nowrap; }
.filters span { margin: 11px 0 0 2px; }
.pane { background: #f4f4f4; border-left: 1px solid #d2d0ce; display: flex; flex-direction: column; align-items: center; padding-top: 19px; }
.pane span { margin-top: 21px; margin-right: 4px; }
.vis { width: 44px; }
.dat { width: 43px; }

.status { height: 30px; flex: none; border-top: 1px solid #d2d0ce; border-bottom: 1px solid #000; display: flex; align-items: center; padding: 0 23px 0 5px; font-size: 14.500px; color: #444; }
.zoom { margin-left: auto; }
.pct { margin: 0 25px 0 16px; width: 29px; white-space: nowrap; }

.taskbar { height: 60px; flex: none; display: flex; align-items: center; font-size: 14.500px; color: #222; background: linear-gradient(90deg, #cfe5ea 0, #c9ecee 140px, #cfebee 540px, #f0f1f2 690px, #f0f0f0 780px, #dfe2e8 910px, #dfe3e8 1500px, #f1f1f1 1640px, #f1f1f1 1770px, #c9edee 1850px, #cdeff0 1920px); }
.weather { width: 474px; padding-left: 28px; display: flex; gap: 4px; flex: none; }
.weather > svg { margin-top: -4px; }
.wt { display: flex; flex-direction: column; line-height: 20px; font-size: 14.600px; letter-spacing: -.2px; }
.dim { color: #5d6b70; }
.badge { font: 500 16px "Open Sans", sans-serif; fill: #fff; text-anchor: middle; }
.tsearch { margin-left: 18px; width: 274px; height: 40px; border-radius: 20px; background: rgba(255,255,255,.8); border: 1px solid #dfe3e6; border-bottom-color: #b9bec2; display: flex; align-items: center; gap: 11px; padding-left: 13px; font-size: 17px; color: #5a5f61; flex: none; }
.apps { display: flex; flex: none; margin-left: 2px; }
.app { width: 55.100px; height: 60px; display: flex; align-items: center; justify-content: center; position: relative; }
.run::after { content: ""; position: absolute; bottom: 6px; left: 24px; width: 8px; height: 4px; border-radius: 2px; background: #828488; }
.snip::before { content: ""; position: absolute; left: 2px; top: 5px; width: 50px; height: 50px; border-radius: 5px; background: #e8afad; }
.snip svg { position: relative; }
.snip::after { background: #c42b1c; }
.chev { margin-left: 127px; }
.cloud { margin-left: 22px; }
.lang { width: 40px; text-align: center; margin-left: 17px; line-height: 20px; font-size: 14.600px; }
.tray { margin-left: 17px; }
.clock { margin-left: auto; margin-right: 24px; text-align: right; line-height: 20px; font-size: 15px; white-space: nowrap; }
```
